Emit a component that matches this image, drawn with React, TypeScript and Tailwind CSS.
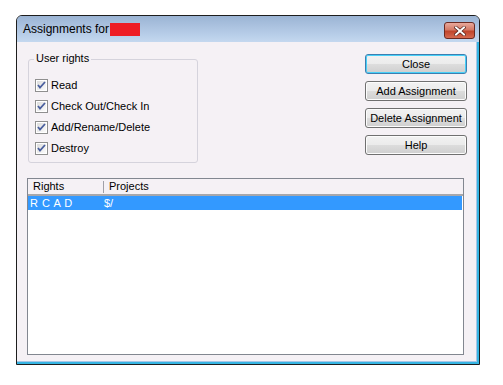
import React from "react";

const font = { fontFamily: '"Liberation Sans", Arial, sans-serif' };

function Check({ label }: { label: string }) {
  return (
    <div className="flex items-center h-[13px] gap-[3px]">
      <svg width="13" height="13" viewBox="0 0 13 13" className="shrink-0">
        <defs>
          <linearGradient id="cbg" x1="0" y1="0" x2="1" y2="1">
            <stop offset="0" stopColor="#dcdcdc" />
            <stop offset="1" stopColor="#fbfbfb" />
          </linearGradient>
        </defs>
        <rect x="0.5" y="0.5" width="12" height="12" fill="#fff" stroke="#8f8f8f" />
        <rect x="2" y="2" width="9" height="9" fill="url(#cbg)" />
        <path d="M3 6 L5 8.5 L10 3" fill="none" stroke="#4a5f9e" strokeWidth="1.8" />
      </svg>
      <span className="text-[11px] text-black leading-none" style={font}>{label}</span>
    </div>
  );
}

function Btn({ label, def }: { label: string; def?: boolean }) {
  return (
    <div
      className={`w-[102px] h-[20px] rounded-[3px] border flex items-center justify-center text-[11px] text-black ${
        def ? "border-[#3c7fb1] shadow-[inset_0_0_0_1px_#48d0f8]" : "border-[#707070] shadow-[inset_0_0_0_1px_#fcfcfc]"
      } bg-[linear-gradient(#f2f2f2_0%,#ebebeb_50%,#dddddd_50%,#cfcfcf_100%)]`}
      style={font}
    >
      {label}
    </div>
  );
}

export default function App() {
  return (
    <div className="w-[503px] h-[385px] bg-white pt-[15px] pl-[16px]">
      <div className="w-[464px] h-[350px] border border-[#1e1e1e] rounded-t-[6px] flex flex-col bg-[#bdd3ec] overflow-hidden">
        <div className="h-[26px] shrink-0 flex items-center pl-[6px] pr-[4px] bg-[linear-gradient(#9bb4d4,#b7cde8_70%,#c4d8ef)]">
          <span className="text-[12px] text-black leading-none" style={font}>
            Assignments for
          </span>
          <div className="w-[30px] h-[13px] bg-[#ee1c24] ml-[1px]" />
          <div className="flex-1" />
          <div className="w-[31px] h-[17px] mt-[3px] rounded-[3px] border border-[#6b2a22] bg-[linear-gradient(#e9a99c,#d47a66_45%,#c0452c_55%,#d66a50)] flex items-center justify-center">
            <svg width="12" height="10" viewBox="0 0 12 10">
              <path d="M2 1.5 L10 8.5 M10 1.5 L2 8.5" stroke="#4d1a14" strokeWidth="3.2" strokeLinecap="square" />
              <path d="M2 1.5 L10 8.5 M10 1.5 L2 8.5" stroke="#ffffff" strokeWidth="2" strokeLinecap="square" />
            </svg>
          </div>
        </div>
        <div className="flex-1 bg-[#f5f1f5] border-r-2 border-b-2 border-r-[#36b5e3] border-b-[#36b5e3] shadow-[inset_-1px_-1px_0_#a9c6e6] flex flex-col pl-[10px] pr-[10px]">
          <div className="flex justify-between mt-[11px]">
            <div className="relative w-[170px] h-[104px] mt-[6px] ml-[1px] border border-[#d5d3dc] rounded-[3px] flex flex-col pl-[6px] pt-[19px] gap-[8px]">
              <span className="absolute -top-[7px] left-[5px] px-[2px] bg-[#f5f1f5] text-[11px] leading-none text-black" style={font}>
                User rights
              </span>
              <Check label="Read" />
              <Check label="Check Out/Check In" />
              <Check label="Add/Rename/Delete" />
              <Check label="Destroy" />
            </div>
            <div className="flex flex-col gap-[7px] mt-[1px]">
              <Btn label="Close" def />
              <Btn label="Add Assignment" />
              <Btn label="Delete Assignment" />
              <Btn label="Help" />
            </div>
          </div>
          <div className="mt-[15px] mr-[3px] h-[177px] border border-[#828790] bg-white flex flex-col">
            <div className="h-[17px] bg-[#f5f1f5] border-b-2 border-b-[#a7a7ab] flex items-center text-[11px] text-black" style={font}>
              <span className="w-[75px] pl-[5px] shrink-0">Rights</span>
              <span className="w-px h-[12px] bg-[#a0a0a8] shrink-0" />
              <span className="pl-[5px]">Projects</span>
            </div>
            <div className="h-[14px] bg-[#3399ff] flex items-center text-[11px] text-white mr-[1px]" style={font}>
              <span className="w-[76px] pl-[2px] shrink-0 tracking-[0.5px]">R C A D</span>
              <span>$/</span>
            </div>
          </div>
        </div>
      </div>
    </div>
  );
}
